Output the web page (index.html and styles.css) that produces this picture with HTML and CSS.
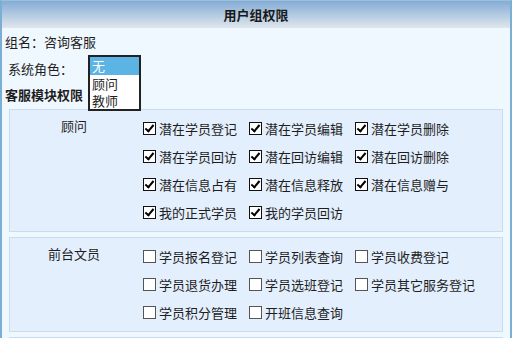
FILE: index.html
```html
<!DOCTYPE html>
<html lang="zh-CN">
<head>
    <meta charset="UTF-8">
    <meta name="viewport" content="width=device-width, initial-scale=1.0">
    <title>用户组权限</title>
    <link rel="stylesheet" href="styles.css">
</head>
<body>

    <div class="group-box">
        <div class="group-title">用户组权限</div>

        <div class="group-info">
            <div class="group-name">组名：咨询客服</div>
            <div class="role-label">系统角色：</div>
            <ul class="role-list" id="role-list">
                <li class="selected">无</li>
                <li>顾问</li>
                <li>教师</li>
            </ul>
            <div class="module-title">客服模块权限</div>
        </div>

        <div class="perm-panel">
            <div class="perm-label">顾问</div>
            <div class="perm-items">
                <label><input type="checkbox" checked>潜在学员登记</label>
                <label><input type="checkbox" checked>潜在学员编辑</label>
                <label><input type="checkbox" checked>潜在学员删除</label>
                <label><input type="checkbox" checked>潜在学员回访</label>
                <label><input type="checkbox" checked>潜在回访编辑</label>
                <label><input type="checkbox" checked>潜在回访删除</label>
                <label><input type="checkbox" checked>潜在信息占有</label>
                <label><input type="checkbox" checked>潜在信息释放</label>
                <label><input type="checkbox" checked>潜在信息赠与</label>
                <label><input type="checkbox" checked>我的正式学员</label>
                <label><input type="checkbox" checked>我的学员回访</label>
            </div>
        </div>

        <div class="perm-panel">
            <div class="perm-label">前台文员</div>
            <div class="perm-items">
                <label><input type="checkbox">学员报名登记</label>
                <label><input type="checkbox">学员列表查询</label>
                <label><input type="checkbox">学员收费登记</label>
                <label><input type="checkbox">学员退货办理</label>
                <label><input type="checkbox">学员选班登记</label>
                <label><input type="checkbox">学员其它服务登记</label>
                <label><input type="checkbox">学员积分管理</label>
                <label><input type="checkbox">开班信息查询</label>
            </div>
        </div>

        <div class="perm-panel"></div>
    </div>

    <script>
        const roleList = document.getElementById('role-list');

        roleList.addEventListener('click', (e) => {
            if (e.target.tagName !== 'LI') return;
            roleList.querySelectorAll('li').forEach(li => li.classList.remove('selected'));
            e.target.classList.add('selected');
        });
    </script>

</body>
</html>
```

FILE: styles.css
```css
html, body {
    height: 100%;
}

body {
    margin: 0;
    font-family: "Noto Sans CJK SC", "Liberation Sans", sans-serif;
    font-size: 13px;
    color: #1e1e1e;
    overflow: hidden;
}

.group-box {
    box-sizing: border-box;
    height: 100%;
    overflow: hidden;
    background-color: #f0f8ff;
    border-left: 2px solid #7aaed2;
    border-right: 2px solid #7aaed2;
    border-top: 1px solid #9cc0dc;
}

.group-title {
    height: 27px;
    line-height: 27px;
    text-align: center;
    font-weight: bold;
    color: #1a1a1a;
    background: linear-gradient(to bottom, #84acd5, #c4d5e6 70%, #e0e6ec);
}

.group-info {
    display: grid;
    grid-template-columns: 86px auto 1fr;
    grid-template-rows: 27px 27px 24px;
    align-items: center;
    margin-bottom: 3px;
}

.group-name {
    grid-column: 1 / 4;
    padding-left: 3px;
}

.role-label {
    padding-left: 6px;
}

.module-title {
    grid-row: 3;
    grid-column: 1;
    padding-left: 3px;
    font-weight: bold;
}

.role-list {
    grid-row: 2 / 4;
    grid-column: 2;
    align-self: start;
    list-style: none;
    margin: 0;
    padding: 0;
    width: 49px;
    height: 52px;
    border: 2px solid #222;
    background-color: #fff;
    cursor: default;
}

.role-list li {
    height: 17px;
    line-height: 17px;
    padding-left: 2px;
}

.role-list li.selected {
    height: 18px;
    background-color: #5bb4e3;
    color: #fff;
}

.perm-panel {
    display: flex;
    margin: 0 7px 5px;
    padding: 4px 0 5px;
    background-color: #e3effd;
    border: 1px solid #c9dcef;
    min-height: 20px;
}

.perm-label {
    width: 128px;
    flex-shrink: 0;
    text-align: center;
    line-height: 24px;
}

.perm-items {
    display: grid;
    grid-template-columns: repeat(3, 106px);
    grid-auto-rows: 28px;
    padding-left: 5px;
}

.perm-items label {
    display: flex;
    align-items: center;
    white-space: nowrap;
}

.perm-items input {
    appearance: none;
    -webkit-appearance: none;
    position: relative;
    width: 13px;
    height: 13px;
    margin: 0 3px 0 0;
    border: 1px solid #555;
    background-color: #fff;
    flex-shrink: 0;
}

.perm-items input:checked {
    border-color: #111;
}

.perm-items input:checked::after {
    content: "";
    position: absolute;
    left: 3px;
    top: 0;
    width: 3px;
    height: 7px;
    border-right: 2.5px solid #000;
    border-bottom: 2.5px solid #000;
    transform: rotate(40deg);
}
```
